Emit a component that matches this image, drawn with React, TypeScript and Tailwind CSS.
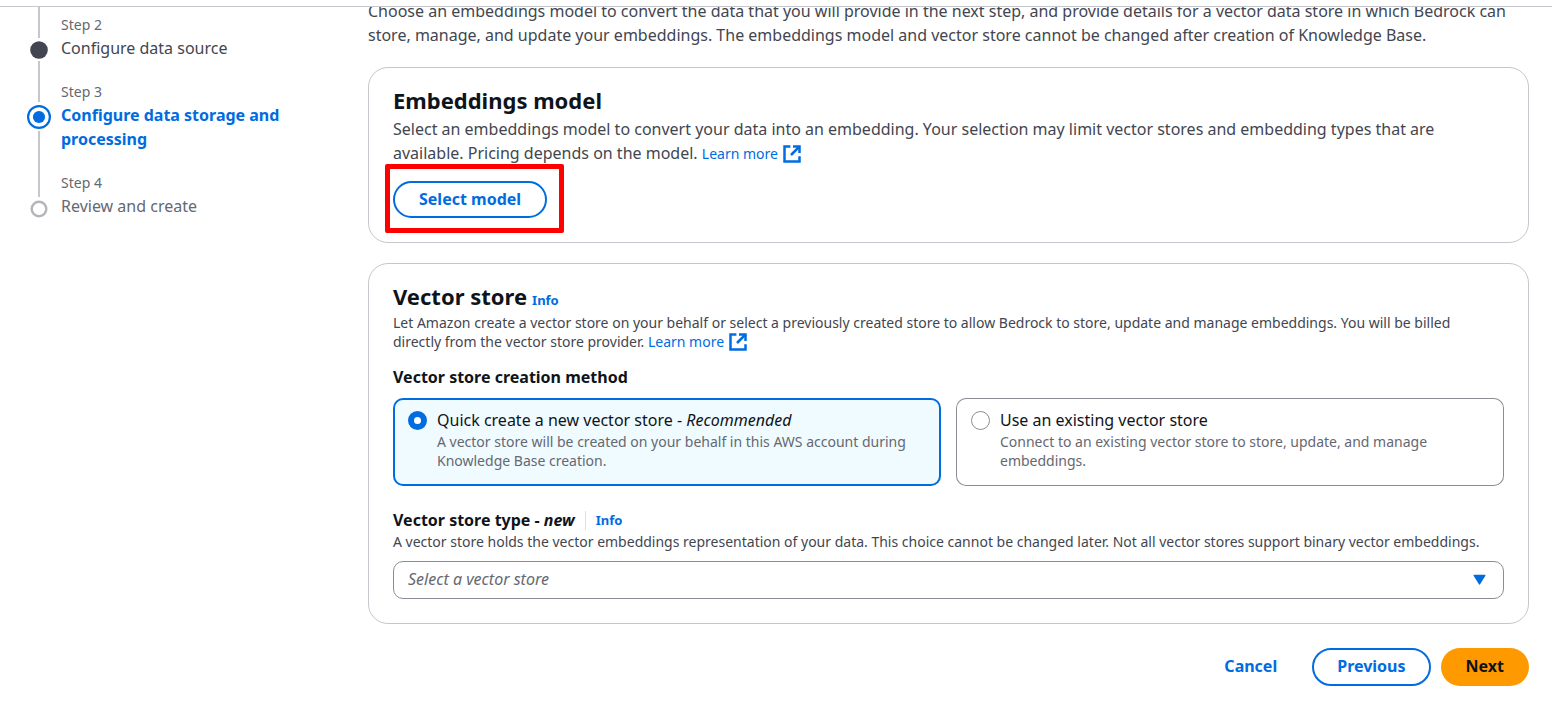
import { useState } from "react";
import type { ReactNode } from "react";

function ExternalIcon() {
  return (
    <svg viewBox="0 0 18 18" className="-my-1 ml-[5px] inline-block h-[18px] w-[18px] align-baseline" fill="none" stroke="currentColor" strokeWidth="2.5" aria-hidden="true">
      <path d="M7.4 1.5H1.5v15h15v-5.2" />
      <path d="M10 1.5h6.5V8" />
      <path d="M16.4 1.6 8 10" />
    </svg>
  );
}

function TextLink({ children, external }: { children: ReactNode; external?: boolean }) {
  return (
    <a href="#" className="text-[14px] leading-none whitespace-nowrap text-[#006ce0]">
      {children}
      {external && <ExternalIcon />}
    </a>
  );
}

function InfoLink() {
  return (
    <a href="#" className="text-[13px] leading-5 font-bold text-[#006ce0]">
      Info
    </a>
  );
}

type StepState = "done" | "current" | "todo";

function Marker({ state }: { state: StepState }) {
  if (state === "current") {
    return (
      <svg viewBox="0 0 24 24" className="mt-[3px] mb-[2px] h-6 w-6 shrink-0" aria-hidden="true">
        <circle cx="12" cy="12" r="10.9" fill="none" stroke="#006ce0" strokeWidth="2.2" />
        <circle cx="12" cy="12" r="6.1" fill="#006ce0" />
      </svg>
    );
  }
  return (
    <svg viewBox="0 0 18 18" className="mt-[3px] mb-[2px] h-[18px] w-[18px] shrink-0" aria-hidden="true">
      {state === "done" ? (
        <circle cx="9" cy="9" r="8.8" fill="#424650" />
      ) : (
        <circle cx="9" cy="9" r="7.3" fill="none" stroke="#b4b4bb" strokeWidth="2.4" />
      )}
    </svg>
  );
}

const titleColor: Record<StepState, string> = {
  done: "text-[#424650]",
  current: "font-bold text-[#006ce0]",
  todo: "text-[#656871]",
};

const railTop: Record<StepState, string> = {
  done: "h-[31px]",
  current: "h-[21px]",
  todo: "h-[25px]",
};

function Step({ label, title, state, first, last }: { label: string; title: string; state: StepState; first?: boolean; last?: boolean }) {
  return (
    <li className="flex gap-[10px]" aria-current={state === "current" ? "step" : undefined}>
      <div className="flex w-6 shrink-0 flex-col items-center">
        <div className={`w-[2px] shrink-0 bg-[#c6c6cd] ${railTop[state]}`} />
        <Marker state={state} />
        {!last && <div className="w-[2px] flex-1 bg-[#c6c6cd]" />}
      </div>
      <div className={`${first ? "pt-[7px]" : ""} ${last ? "" : "pb-[21px]"}`}>
        <div className="text-[14px] leading-[22px] text-[#656871]">{label}</div>
        <a href="#" className={`block text-[16px] leading-6 ${titleColor[state]}`}>{title}</a>
      </div>
    </li>
  );
}

function Tile({ checked, onSelect, title, children }: { checked: boolean; onSelect: () => void; title: ReactNode; children: ReactNode }) {
  return (
    <label
      className={`flex gap-[10px] rounded-[10px] pt-[10px] pr-[14px] pb-4 pl-[15px] ring-inset ${
        checked ? "bg-[#f0fbff] ring-2 ring-[#006ce0]" : "bg-white ring-1 ring-[#8c8c94]"
      }`}
    >
      <input
        type="radio"
        name="creation-method"
        checked={checked}
        onChange={onSelect}
        className="mt-[3px] h-[19px] w-[19px] shrink-0 appearance-none rounded-full border border-[#8c8c94] bg-white checked:border-[6px] checked:border-[#006ce0]"
      />
      <span className="block">
        <span className="block text-[16px] leading-6 text-[#0f141a]">{title}</span>
        <span className="block text-[14px] leading-[19px] text-[#656871]">{children}</span>
      </span>
    </label>
  );
}

export default function App() {
  const [method, setMethod] = useState("quick");
  return (
    <div className="min-h-screen bg-white font-['Noto_Sans',sans-serif] text-[#424650]">
      <header className="relative z-10 h-[7px] border-b border-[#c6c6cd] bg-white" />
      <div className="flex">
        <nav aria-label="Steps" className="w-[368px] shrink-0 pr-[80px] pl-[27px]">
          <ol>
            <Step label="Step 2" title="Configure data source" state="done" first />
            <Step label="Step 3" title="Configure data storage and processing" state="current" />
            <Step label="Step 4" title="Review and create" state="todo" last />
          </ol>
        </nav>
        <main className="min-w-0 flex-1 pr-[23px]">
          <p className="-mt-[8px] text-[16px] leading-6">
            Choose an embeddings model to convert the data that you will provide in the next step, and provide details for a vector data store in which Bedrock can
            <br />
            store, manage, and update your embeddings. The embeddings model and vector store cannot be changed after creation of Knowledge Base.
          </p>

          <section className="mt-5 rounded-[20px] border border-[#c6c6cd] px-6 pt-[18px] pb-6">
            <h2 className="text-[22px] leading-7 font-bold text-[#0f141a]">Embeddings model</h2>
            <p className="mt-[3px] text-[16px] leading-6">
              Select an embeddings model to convert your data into an embedding. Your selection may limit vector stores and embedding types that are
              <br />
              available. Pricing depends on the model. <TextLink external>Learn more</TextLink>
            </p>
            <div className="relative mt-4 w-fit">
              <button type="button" className="block h-[37px] rounded-[20px] border-2 border-[#006ce0] px-6 pb-[2px] text-[16px] leading-6 font-bold text-[#006ce0]">
                Select model
              </button>
              <div className="pointer-events-none absolute -top-[17px] -right-[17px] -bottom-[15px] -left-[8px] rounded-[2px] border-[5px] border-[#ff0000]" />
            </div>
          </section>

          <section className="mt-5 rounded-[20px] border border-[#c6c6cd] px-6 pt-[18px] pb-6">
            <div className="flex items-baseline gap-[5px]">
              <h2 className="text-[22px] leading-7 font-bold text-[#0f141a]">Vector store</h2>
              <InfoLink />
            </div>
            <p className="mt-[3px] text-[14px] leading-[19px]">
              Let Amazon create a vector store on your behalf or select a previously created store to allow Bedrock to store, update and manage embeddings. You will be billed
              <br />
              directly from the vector store provider. <TextLink external>Learn more</TextLink>
            </p>
            <fieldset className="mt-[14px]">
              <legend className="text-[16px] leading-6 font-bold text-[#0f141a]">Vector store creation method</legend>
              <div className="mt-[9px] grid grid-cols-2 gap-[15px]">
                <Tile
                  checked={method === "quick"}
                  onSelect={() => setMethod("quick")}
                  title={<>Quick create a new vector store - <em>Recommended</em></>}
                >
                  A vector store will be created on your behalf in this AWS account during
                  <br />
                  Knowledge Base creation.
                </Tile>
                <Tile checked={method === "existing"} onSelect={() => setMethod("existing")} title="Use an existing vector store">
                  Connect to an existing vector store to store, update, and manage
                  <br />
                  embeddings.
                </Tile>
              </div>
            </fieldset>
            <div className="mt-[22px] flex items-center gap-[10px]">
              <label htmlFor="store-type" className="text-[16px] leading-6 font-bold text-[#0f141a]">
                Vector store type - <em>new</em>
              </label>
              <span className="flex h-[19px] items-center border-l border-[#dedee3] pl-[10px]">
                <InfoLink />
              </span>
            </div>
            <p className="text-[14px] leading-[19px]">
              A vector store holds the vector embeddings representation of your data. This choice cannot be changed later. Not all vector stores support binary vector embeddings.
            </p>
            <div className="relative mt-[10px]">
              <select
                id="store-type"
                defaultValue=""
                className="block h-[38px] w-full appearance-none rounded-[10px] border border-[#8c8c94] bg-white pr-10 pb-[2px] pl-[14px] text-[16px] leading-6 text-[#656871] italic"
              >
                <option value="">Select a vector store</option>
              </select>
              <svg viewBox="0 0 14 12" className="pointer-events-none absolute top-[13px] right-[17px] h-3 w-[14px]" fill="#006ce0" stroke="#006ce0" strokeWidth="1.4" strokeLinejoin="round" aria-hidden="true">
                <path d="M1.2 1.4h10.6L6.5 9.9z" />
              </svg>
            </div>
          </section>

          <div className="mt-6 flex justify-end gap-[10px] text-[16px] leading-6 font-bold text-[#006ce0]">
            <button type="button" className="h-[38px] px-[25px] pb-[2px]">Cancel</button>
            <button type="button" className="h-[38px] rounded-[20px] border-2 border-[#006ce0] px-[23px] pb-[2px]">Previous</button>
            <button type="button" className="h-[38px] rounded-[20px] bg-[#ff9900] px-[25px] pb-[2px] text-[#0f141a]">Next</button>
          </div>
        </main>
      </div>
    </div>
  );
}
